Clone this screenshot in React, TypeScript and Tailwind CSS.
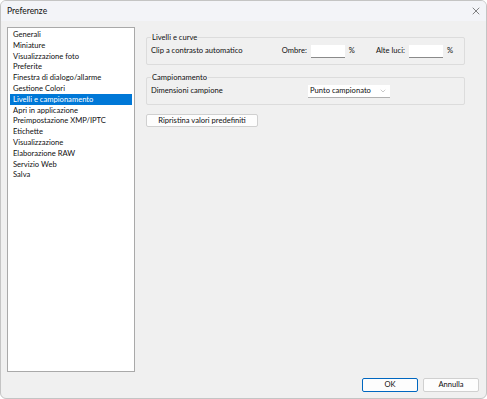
import { X, ChevronDown } from 'lucide-react'

const items = [
  'Generali',
  'Miniature',
  'Visualizzazione foto',
  'Preferite',
  'Finestra di dialogo/allarme',
  'Gestione Colori',
  'Livelli e campionamento',
  'Apri in applicazione',
  'Preimpostazione XMP/IPTC',
  'Etichette',
  'Visualizzazione',
  'Elaborazione RAW',
  'Servizio Web',
  'Salva',
]

function GroupBox({ title, children }: { title: string; children: React.ReactNode }) {
  return (
    <div className="relative border border-[#dcdcdc] rounded-[2px] h-[28px] pl-[4px] pr-[11px] flex items-center whitespace-nowrap">
      <span className="absolute -top-[7px] left-[4px] bg-[#f0f0f0] px-[1px] leading-[12px]">{title}</span>
      {children}
    </div>
  )
}

function TextBox() {
  return <div className="w-[34px] h-[13px] shrink-0 bg-white border-b border-[#8a8a8a]" />
}

export default function App() {
  return (
    <div
      className="w-[487px] h-[399px] bg-[#f0f0f0] border border-[#c4c4c4] rounded-[6px] overflow-hidden flex flex-col text-[7.6px] text-[#111]"
      style={{ fontFamily: 'Lato, "Noto Sans", sans-serif' }}
    >
      {/* Title bar */}
      <div className="h-[20px] bg-[#f3f4f8] flex items-center justify-between pl-[6px] pr-[4px] shrink-0">
        <span className="text-[8.5px]">Preferenze</span>
        <X size={12} strokeWidth={1.2} className="text-[#333]" />
      </div>

      <div className="flex flex-1 min-h-0 px-[6px] pt-[6px] gap-[11px]">
        {/* Category list */}
        <div className="w-[128px] bg-white border border-[#a9a9a9] py-[1px] px-[2px]">
          {items.map((it) => (
            <div
              key={it}
              className={`h-[10.8px] leading-[10.8px] px-[3px] whitespace-nowrap ${
                it === 'Livelli e campionamento' ? 'bg-[#0078d7] text-white' : ''
              }`}
            >
              {it}
            </div>
          ))}
        </div>

        {/* Settings */}
        <div className="flex flex-col w-[319px] pt-[10px]">
          <GroupBox title="Livelli e curve">
            <span className="flex-1">Clip a contrasto automatico</span>
            <span>Ombre:</span>
            <div className="ml-[4px]"><TextBox /></div>
            <span className="ml-[4px]">%</span>
            <span className="ml-[21px]">Alte luci:</span>
            <div className="ml-[4px]"><TextBox /></div>
            <span className="ml-[4px]">%</span>
          </GroupBox>

          <div className="h-[12px]" />

          <GroupBox title="Campionamento">
            <span className="w-[157px] shrink-0">Dimensioni campione</span>
            <div className="w-[82px] h-[13px] shrink-0 bg-white border-b border-[#b0b0b0] flex items-center justify-between pl-[2px] pr-[3px]">
              <span>Punto campionato</span>
              <ChevronDown size={8} strokeWidth={1.2} className="text-[#777]" />
            </div>
          </GroupBox>

          <div className="mt-[9px]">
            <div className="w-[112px] h-[13px] bg-[#fdfdfd] border border-[#d0d0d0] rounded-[2px] flex items-center justify-center whitespace-nowrap">
              Ripristina valori predefiniti
            </div>
          </div>
        </div>
      </div>

      {/* Footer buttons */}
      <div className="flex justify-end gap-[5px] px-[7px] pt-[6px] pb-[6px] shrink-0">
        <div className="w-[56px] h-[14px] bg-[#fdfdfd] border border-[#0067c0] rounded-[2px] flex items-center justify-center">
          OK
        </div>
        <div className="w-[56px] h-[14px] bg-[#fdfdfd] border border-[#d0d0d0] rounded-[2px] flex items-center justify-center">
          Annulla
        </div>
      </div>
    </div>
  )
}
